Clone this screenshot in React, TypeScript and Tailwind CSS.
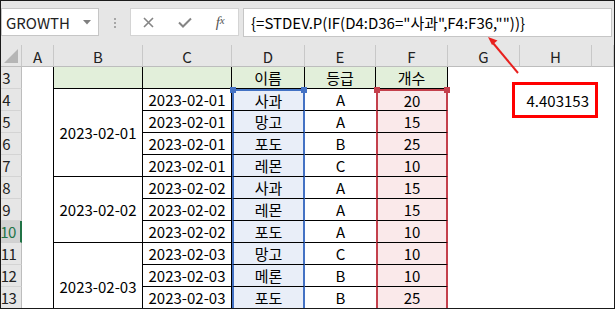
import React from 'react';

type Row = { n: number; date: string; name: string; grade: string; count: string };

const rows: Row[] = [
  { n: 4, date: '2023-02-01', name: '사과', grade: 'A', count: '20' },
  { n: 5, date: '2023-02-01', name: '망고', grade: 'A', count: '15' },
  { n: 6, date: '2023-02-01', name: '포도', grade: 'B', count: '25' },
  { n: 7, date: '2023-02-01', name: '레몬', grade: 'C', count: '10' },
  { n: 8, date: '2023-02-02', name: '사과', grade: 'A', count: '15' },
  { n: 9, date: '2023-02-02', name: '레몬', grade: 'A', count: '15' },
  { n: 10, date: '2023-02-02', name: '포도', grade: 'A', count: '10' },
  { n: 11, date: '2023-02-03', name: '망고', grade: 'C', count: '10' },
  { n: 12, date: '2023-02-03', name: '메론', grade: 'B', count: '10' },
  { n: 13, date: '2023-02-03', name: '포도', grade: 'B', count: '25' },
  // row 14 lies below the visible area; kept only so the merged B cell keeps its height
  { n: 14, date: '', name: '', grade: '', count: '' },
];

// merged B cells: first row -> span class
const merged: Record<number, { date: string; span: string }> = {
  4: { date: '2023-02-01', span: 'row-span-4' },
  8: { date: '2023-02-02', span: 'row-span-3' },
  11: { date: '2023-02-03', span: 'row-span-4' },
};

const cols = ['A', 'B', 'C', 'D', 'E', 'F', 'G', 'H', ''];

function RowHeader({ n, active }: { n: number; active?: boolean }) {
  const wide = n >= 10;
  return (
    <div
      className={
        (active
          ? 'border-r-2 border-b-[#d0d0d0] border-r-[#217346] bg-[#d2d2d2] text-[#217346] '
          : 'border-r border-b-[#d4d4d4] border-r-[#bdbdbd] bg-[#e6e6e6] text-[#222] ') +
        (wide ? 'pr-[5px] ' : 'pr-[9px] ') +
        'flex items-center justify-center overflow-hidden border-b'
      }
    >
      {n < 14 && (
        <span className={wide ? 'whitespace-nowrap text-[15px] tracking-[-0.5px]' : 'whitespace-nowrap text-[15px]'}>{n}</span>
      )}
    </div>
  );
}

function Handle({ color, side }: { color: string; side: 'left' | 'right' }) {
  return (
    <span
      className={
        (side === 'left' ? '-left-[4px] ' : '-right-[4px] ') +
        'absolute -top-[4px] h-[6px] w-[6px] ' +
        color
      }
    />
  );
}

export default function App() {
  return (
    <div className="relative h-[309px] w-[615px] overflow-hidden border border-[#1a1a1a] bg-white font-['Noto_Sans_CJK_KR','Noto_Sans',sans-serif] text-[15px] leading-none text-black">
      {/* Formula bar */}
      <div className="flex h-[44px] items-start bg-[#e6e6e6] pt-[7px]">
        <div className="flex h-[28px] w-[98px] items-center border border-[#c6c6c6] bg-white pl-[4px] pr-[7px]">
          <span className="flex-1 text-[15px] text-[#222]">GROWTH</span>
          <svg width="8" height="5" viewBox="0 0 8 5">
            <path d="M0 0h8L4 4.5z" fill="#7f7f7f" />
          </svg>
        </div>
        <div className="ml-[15px] mt-[10px] flex flex-col gap-[2px]">
          <span className="h-[2px] w-[2px] bg-[#a6a6a6]" />
          <span className="h-[2px] w-[2px] bg-[#a6a6a6]" />
          <span className="h-[2px] w-[2px] bg-[#a6a6a6]" />
        </div>
        <div className="ml-[14px] flex h-[28px] w-[109px] items-center border border-[#d4d4d4] bg-white">
          <span className="flex w-[36px] justify-center">
            <svg width="11" height="11" viewBox="0 0 11 11">
              <path d="M1 1l9 9M10 1l-9 9" stroke="#858585" strokeWidth="1.6" />
            </svg>
          </span>
          <span className="flex w-[36px] justify-center">
            <svg width="14" height="11" viewBox="0 0 14 11">
              <path d="M1 5.5l4 4L13 1.5" stroke="#858585" strokeWidth="2" fill="none" />
            </svg>
          </span>
          <span className="flex w-[36px] justify-center font-['Liberation_Serif',serif] text-[15px] italic text-[#555]">
            f<span className="text-[11px]">x</span>
          </span>
        </div>
        <div className="ml-[4px] mr-[2px] flex h-[29px] flex-1 items-center border border-[#c6c6c6] bg-white pl-[7px]">
          <span className="whitespace-nowrap text-[15px]">{'{=STDEV.P(IF(D4:D36="사과",F4:F36,""))}'}</span>
        </div>
      </div>

      {/* Sheet grid */}
      <div className="grid grid-cols-[21px_32px_89px_89px_73px_71px_72px_72px_72px_1fr] auto-rows-[22px]">
        {/* column headers */}
        <div className="relative border-b border-r border-b-[#bdbdbd] border-r-[#c8c8c8] bg-[#e6e6e6]">
          <svg className="absolute bottom-[3px] right-[3px]" width="14" height="14" viewBox="0 0 14 14">
            <path d="M14 0v14H0z" fill="#b5b5b5" />
          </svg>
        </div>
        {cols.map((c, i) => (
          <div
            key={i}
            className="flex items-center justify-center border-b border-r border-b-[#bdbdbd] border-r-[#c8c8c8] bg-[#e6e6e6] pt-[2px] text-[15px] text-[#222]"
          >
            {c}
          </div>
        ))}

        {/* row 3 */}
        <RowHeader n={3} />
        <div className="border-r border-black" />
        <div className="border-b border-r border-black bg-[#e2efda]" />
        <div className="border-b border-r border-black bg-[#e2efda]" />
        <div className="flex items-center justify-center border-b border-r border-black bg-[#e2efda]">이름</div>
        <div className="flex items-center justify-center border-b border-r border-black bg-[#e2efda]">등급</div>
        <div className="flex items-center justify-center border-b border-r border-black bg-[#e2efda]">개수</div>
        <div />
        <div />
        <div />

        {rows.map((r, i) => (
          <React.Fragment key={r.n}>
            <RowHeader n={r.n} active={r.n === 10} />
            <div className="border-r border-black" />
            {merged[r.n] && (
              <div
                className={
                  'flex items-center justify-center border-b border-r border-black ' + merged[r.n].span
                }
              >
                {merged[r.n].date}
              </div>
            )}
            <div className="flex items-center justify-center border-b border-r border-black">{r.date}</div>
            <div
              className={
                'relative flex items-center justify-center border-x-2 border-b border-x-[#4472c4] border-b-black bg-[#e9eef8] ' +
                (i === 0 ? 'border-t-2 border-t-[#4472c4]' : '')
              }
            >
              {i === 0 && <Handle color="bg-[#4472c4]" side="left" />}
              {i === 0 && <Handle color="bg-[#4472c4]" side="right" />}
              {r.name}
            </div>
            <div className="flex items-center justify-center border-b border-black">{r.grade}</div>
            <div
              className={
                'relative flex items-center justify-center border-x-2 border-b border-x-[#c4404c] border-b-black bg-[#fae9ea] ' +
                (i === 0 ? 'border-t-2 border-t-[#c4404c]' : '')
              }
            >
              {i === 0 && <Handle color="bg-[#c4404c]" side="left" />}
              {i === 0 && <Handle color="bg-[#c4404c]" side="right" />}
              {r.count}
            </div>
            <div />
            <div className="flex items-center justify-end pr-[3px]">{i === 0 ? '4.403153' : ''}</div>
            <div />
          </React.Fragment>
        ))}
      </div>

      {/* annotation: result box + arrow */}
      <div className="pointer-events-none absolute left-[511px] top-[81px] h-[36px] w-[86px] border-[3px] border-[#ff0000]" />
      <svg className="pointer-events-none absolute left-0 top-0" width="615" height="309">
        <line x1="517" y1="72" x2="492" y2="42" stroke="#e8201e" strokeWidth="2" />
        <path d="M487 36l9.5 3.5-5.5 4.5z" fill="#e8201e" />
      </svg>
    </div>
  );
}
